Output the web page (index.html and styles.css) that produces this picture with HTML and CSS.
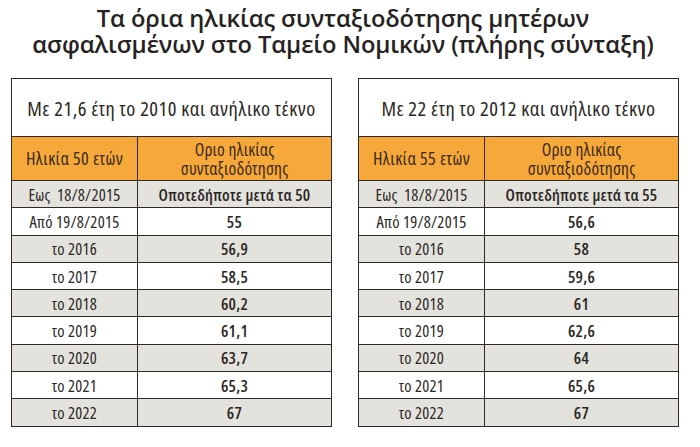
FILE: index.html
```html
<!DOCTYPE html>
<html lang="el">
<head>
<meta charset="utf-8">
<link rel="stylesheet" href="styles.css">
</head>
<body>
<h1 class="title">Τα όρια ηλικίας συνταξιοδότησης μητέρων<br>ασφαλισμένων στο Ταμείο Νομικών (πλήρης σύνταξη)</h1>
<div class="tables">
  <table class="grid">
    <colgroup><col class="col-a"><col class="col-b"></colgroup>
    <tr><td class="caption" colspan="2">Με 21,6 έτη το 2010 και ανήλικο τέκνο</td></tr>
    <tr class="head"><td class="c1">Ηλικία 50 ετών</td><td class="c2">Οριο ηλικίας<br>συνταξιοδότησης</td></tr>
    <tr class="g"><td>Εως &nbsp;18/8/2015</td><td class="v">Οποτεδήποτε μετά τα 50</td></tr>
    <tr><td>Από 19/8/2015</td><td class="v">55</td></tr>
    <tr class="g"><td>το 2016</td><td class="v">56,9</td></tr>
    <tr><td>το 2017</td><td class="v">58,5</td></tr>
    <tr class="g"><td>το 2018</td><td class="v">60,2</td></tr>
    <tr><td>το 2019</td><td class="v">61,1</td></tr>
    <tr class="g"><td>το 2020</td><td class="v">63,7</td></tr>
    <tr><td>το 2021</td><td class="v">65,3</td></tr>
    <tr class="g"><td>το 2022</td><td class="v">67</td></tr>
  </table>
  <table class="grid">
    <colgroup><col class="col-a"><col class="col-b"></colgroup>
    <tr><td class="caption" colspan="2">Με 22 έτη το 2012 και ανήλικο τέκνο</td></tr>
    <tr class="head"><td class="c1">Ηλικία 55 ετών</td><td class="c2">Οριο ηλικίας<br>συνταξιοδότησης</td></tr>
    <tr class="g"><td>Εως &nbsp;18/8/2015</td><td class="v">Οποτεδήποτε μετά τα 55</td></tr>
    <tr><td>Από 19/8/2015</td><td class="v">56,6</td></tr>
    <tr class="g"><td>το 2016</td><td class="v">58</td></tr>
    <tr><td>το 2017</td><td class="v">59,6</td></tr>
    <tr class="g"><td>το 2018</td><td class="v">61</td></tr>
    <tr><td>το 2019</td><td class="v">62,6</td></tr>
    <tr class="g"><td>το 2020</td><td class="v">64</td></tr>
    <tr><td>το 2021</td><td class="v">65,6</td></tr>
    <tr class="g"><td>το 2022</td><td class="v">67</td></tr>
  </table>
</div>
</body>
</html>
```
FILE: styles.css
```css
html, body { margin: 0; padding: 0; background: #fff; }
body { width: 700px; height: 447px; overflow: hidden; color: #2a2724; }
.title {
  margin: 5px 0 0;
  padding-right: 14px;
  text-align: center;
  font-family: "Open Sans", "Noto Sans", sans-serif;
  font-weight: 600;
  font-size: 23.7px;
  line-height: 26px;
  letter-spacing: -0.1px;
  color: #26221f;
}
.tables {
  display: flex;
  gap: 26px;
  padding: 0 0 0 11px;
  margin-top: 21px;
}
.grid {
  border-collapse: collapse;
  width: 321px;
  font-family: "Open Sans", "Noto Sans", sans-serif;
  font-stretch: 75%;
  font-size: 16.5px;
  letter-spacing: 0.25px;
  color: #2a2724;
  table-layout: fixed;
}
.col-a { width: 126px; }
.grid td {
  border: 1.5px solid #2e2924;
  text-align: center;
  height: 26.3px;
  padding: 0;
  white-space: nowrap;
}
.caption { height: 57px !important; font-size: 20.5px; letter-spacing: 0.5px; background: #fff; }
.head td { background: #f6a93a; height: 43px; font-size: 18px; line-height: 19px; letter-spacing: 0.4px; color: #3a2a18; }
.head .c2 { font-size: 17.5px; letter-spacing: 0.2px; }
.g td { background: #e4e2dd; }
.v { font-weight: 600; }
```
